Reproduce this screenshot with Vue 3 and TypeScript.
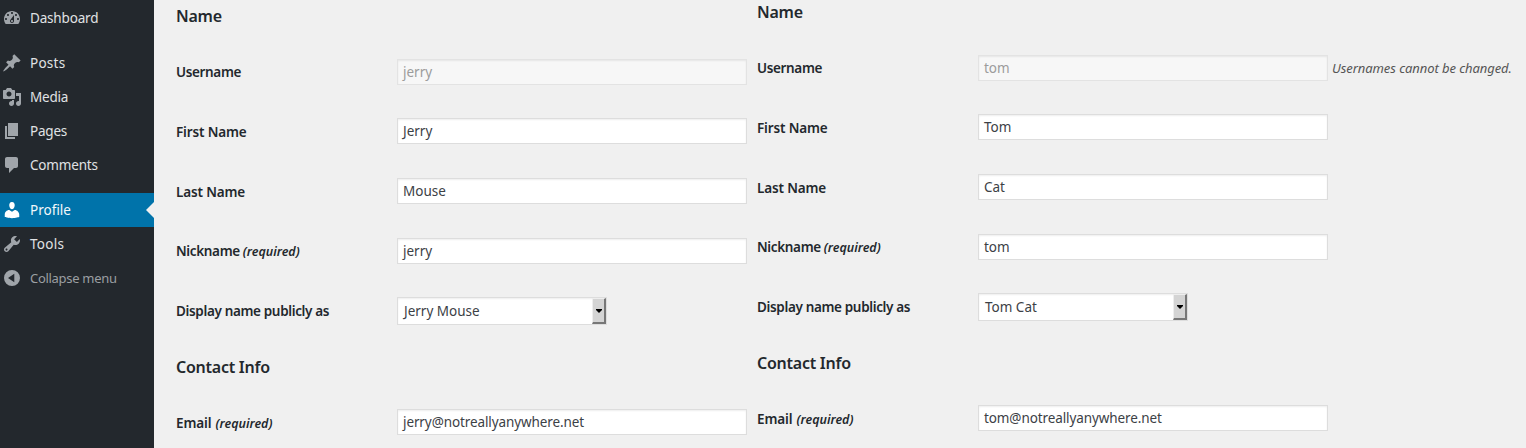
<script setup lang="ts">
interface MenuItem { label: string; icon: string; active?: boolean; gap?: boolean; collapse?: boolean; cls: string }
interface Field { label: string; value: string; cls: string; required?: boolean; disabled?: boolean; select?: boolean; note?: string }

const menu: MenuItem[] = [
  { label: 'Dashboard', cls: 'm-dashboard', icon: 'M3.76 16h12.48c1.1-1.37 1.76-3.11 1.76-5 0-4.42-3.58-8-8-8s-8 3.58-8 8c0 1.89.66 3.63 1.76 5zM10 4c.55 0 1 .45 1 1s-.45 1-1 1-1-.45-1-1 .45-1 1-1zM6 6c.55 0 1 .45 1 1s-.45 1-1 1-1-.45-1-1 .45-1 1-1zm8 0c.55 0 1 .45 1 1s-.45 1-1 1-1-.45-1-1 .45-1 1-1zm-5.37 5.55L12 7v6c0 1.1-.9 2-2 2s-2-.9-2-2c0-.57.24-1.08.63-1.45zM4 10c.55 0 1 .45 1 1s-.45 1-1 1-1-.45-1-1 .45-1 1-1zm12 0c.55 0 1 .45 1 1s-.45 1-1 1-1-.45-1-1 .45-1 1-1zm-5 3c0-.55-.45-1-1-1s-1 .45-1 1 .45 1 1 1 1-.45 1-1z' },
  { label: 'Posts', cls: 'm-posts', gap: true, icon: 'M10.44 3.02l1.82-1.82 6.36 6.35-1.83 1.82c-1.05-.68-2.48-.57-3.41.36l-.75.75c-.92.93-1.04 2.35-.35 3.41l-1.83 1.82-2.41-2.41-2.8 2.79c-.42.42-3.38 2.71-3.8 2.29s1.86-3.39 2.28-3.81l2.79-2.79L4.1 9.36l1.83-1.82c1.05.69 2.48.57 3.4-.36l.75-.75c.93-.92 1.05-2.35.36-3.41z' },
  { label: 'Media', cls: 'm-media', icon: 'M13 11V4c0-.55-.45-1-1-1h-1.67L9 1H5L3.67 3H2c-.55 0-1 .45-1 1v7c0 .55.45 1 1 1h10c.55 0 1-.45 1-1zM7 4.5c1.38 0 2.5 1.12 2.5 2.5S8.38 9.5 7 9.5 4.5 8.38 4.5 7 5.62 4.5 7 4.5zM14 6h5v10.5c0 1.38-1.12 2.5-2.5 2.5S14 17.88 14 16.5s1.12-2.5 2.5-2.5c.17 0 .34.02.5.05V9h-3V6zm-4 8.05V13h2v3.5c0 1.38-1.12 2.5-2.5 2.5S7 17.88 7 16.5 8.12 14 9.5 14c.17 0 .34.02.5.05z' },
  { label: 'Pages', cls: 'm-pages', icon: 'M6 15V2h10v13H6zm-1 1h8v2H3V5h2v11z' },
  { label: 'Comments', cls: 'm-comments', icon: 'M5 2h9c1.1 0 2 .9 2 2v7c0 1.1-.9 2-2 2h-2l-5 5v-5H5c-1.1 0-2-.9-2-2V4c0-1.1.9-2 2-2z' },
  { label: 'Profile', cls: 'm-profile', gap: true, active: true, icon: 'M10 9.25c-2.27 0-2.73-3.44-2.73-3.44C7 4.02 7.82 2 9.97 2c2.16 0 2.98 2.02 2.71 3.81 0 0-.41 3.44-2.68 3.44zm0 2.57L12.72 10c2.39 0 4.52 2.33 4.52 4.53v2.49s-3.65 1.13-7.24 1.13c-3.65 0-7.24-1.13-7.24-1.13v-2.49c0-2.25 1.94-4.48 4.47-4.48z' },
  { label: 'Tools', cls: 'm-tools', icon: 'M16.68 9.77c-1.34 1.34-3.3 1.67-4.95.99l-5.41 6.52c-.99.99-2.59.99-3.58 0s-.99-2.59 0-3.57l6.52-5.42c-.68-1.65-.35-3.61.99-4.95 1.28-1.28 3.12-1.62 4.72-1.06l-2.89 2.89 2.82 2.82 2.86-2.87c.53 1.58.18 3.39-1.08 4.65zM3.81 16.21c.4.39 1.04.39 1.43 0 .4-.4.4-1.04 0-1.43-.39-.4-1.03-.4-1.43 0-.39.39-.39 1.03 0 1.43z' },
  { label: 'Collapse menu', cls: 'm-collapse', collapse: true, icon: 'M10 2a8 8 0 1 0 0 16a8 8 0 1 0 0-16zM12.3 5.8v8.4L6 10z' },
]

function nameFields(user: string, first: string, last: string, note?: string): Field[] {
  return [
    { label: 'Username', value: user, cls: 'username', disabled: true, note },
    { label: 'First Name', value: first, cls: 'first' },
    { label: 'Last Name', value: last, cls: 'last' },
    { label: 'Nickname', value: user, cls: 'nickname', required: true },
    { label: 'Display name publicly as', value: `${first} ${last}`, cls: 'display', select: true },
  ]
}

const profiles = [
  { id: 'jerry', sections: [
    { title: 'Name', fields: nameFields('jerry', 'Jerry', 'Mouse') },
    { title: 'Contact Info', fields: [{ label: 'Email', value: 'jerry@notreallyanywhere.net', cls: 'email', required: true }] as Field[] },
  ] },
  { id: 'tom', sections: [
    { title: 'Name', fields: nameFields('tom', 'Tom', 'Cat', 'Usernames cannot be changed.') },
    { title: 'Contact Info', fields: [{ label: 'Email', value: 'tom@notreallyanywhere.net', cls: 'email', required: true }] as Field[] },
  ] },
]
</script>

<template>
  <div class="page">
    <nav class="sidebar">
      <a v-for="m in menu" :key="m.label" class="item" :class="[m.cls, { active: m.active, gap: m.gap, collapse: m.collapse }]">
        <svg class="icon" viewBox="0 0 20 20"><path :d="m.icon" fill-rule="evenodd" /></svg>
        <span class="name">{{ m.label }}</span>
      </a>
    </nav>
    <main class="profiles">
      <section v-for="p in profiles" :key="p.id" class="profile" :class="p.id">
        <div v-for="s in p.sections" :key="s.title" class="section">
          <h2 :class="{ contact: s.title !== 'Name' }"><span>{{ s.title }}</span></h2>
          <div v-for="f in s.fields" :key="f.label" class="row" :class="f.cls">
            <label><span class="text">{{ f.label }}</span><em v-if="f.required">(required)</em></label>
            <div v-if="f.select" class="control select">
              <span class="value">{{ f.value }}</span>
              <span class="arrow"><svg viewBox="0 0 6 4" width="6" height="4"><path d="M0 0h6v1L3 4L0 1z" /></svg></span>
            </div>
            <div v-else class="control" :class="{ disabled: f.disabled }"><span class="value">{{ f.value }}</span></div>
            <span v-if="f.note" class="note">{{ f.note }}</span>
          </div>
        </div>
      </section>
    </main>
  </div>
</template>

<style>
body { margin: 0; background: #f0f0f0; overflow: hidden; }
</style>

<style scoped>
.page { display: flex; width: 1526px; height: 448px; overflow: hidden; background: #f0f0f0; color: #23282d; font-family: "Noto Sans", sans-serif; font-size: 13.5px; }
.sidebar { width: 154px; box-sizing: border-box; padding-top: 1px; background: #23282d; flex: none; }
.item { display: flex; position: relative; height: 34px; align-items: center; padding-left: 2px; color: #e0e2e4; }
.item.gap { margin-top: 11px; }
.icon { width: 20px; height: 20px; fill: #a0a5aa; flex: none; }
.name { margin-left: 8px; white-space: nowrap; line-height: 20px; }
.m-dashboard .name, .m-comments .name { letter-spacing: -.18px; }
.m-posts .name, .m-tools .name { letter-spacing: .25px; }
.m-media .name, .m-pages .name { letter-spacing: -.2px; }
.active { background: #0073aa; color: #f2f8fb; }
.active .icon { fill: #fff; }
.active::after { content: ""; position: absolute; right: 0; top: 9px; border: 8px solid transparent; border-left: 0; border-right-color: #f0f0f0; }
.collapse { color: #9b9fa2; font-size: 13px; letter-spacing: -.3px; }
.profiles { display: flex; padding-left: 22px; }
.profile { width: 581px; flex: none; }
.tom { width: 765px; margin-top: -4px; }
h2 { margin: 0; height: 59px; font-size: 16px; line-height: 33px; font-weight: 600; letter-spacing: -.25px; white-space: nowrap; }
h2.contact { height: 58px; }
.row { display: flex; height: 60px; align-items: flex-start; }
.username, .nickname { height: 59px; }
.display { height: 54px; }
label { width: 221px; flex: none; line-height: 26px; font-weight: 600; white-space: nowrap; font-size: 13.5px; letter-spacing: -.35px; }
.first .text, .last .text { letter-spacing: -.15px; }
.email .text { letter-spacing: -.1px; }
label em { margin-left: 3px; font-size: 12.5px; letter-spacing: 0; }
.email label em { margin-left: 4px; }
.first label, .last label, .email label { padding-top: 1px; }
.display label { line-height: 28px; }
.control { box-sizing: border-box; width: 350px; height: 26px; flex: none; display: flex; border: 1px solid #ddd; background: #fff; box-shadow: inset 0 1px 2px rgba(0,0,0,.07); padding-left: 5px; line-height: 25px; color: #3c4146; white-space: nowrap; }
.email .value { letter-spacing: -.1px; }
.disabled { background: #f7f7f7; border-color: #e3e3e3; color: #9c9c9c; }
.select { width: 210px; height: 28px; line-height: 27px; padding-left: 6px; justify-content: space-between; }
.arrow { box-sizing: border-box; width: 14px; height: 26px; display: flex; align-items: center; justify-content: center; background: #d4d4d4; border: 1px solid #eee; border-right: 2px solid #777; border-bottom: 2px solid #777; }
.note { margin-left: 4px; font-size: 13px; line-height: 27px; font-style: italic; color: #555; letter-spacing: -.07px; white-space: nowrap; }
</style>
